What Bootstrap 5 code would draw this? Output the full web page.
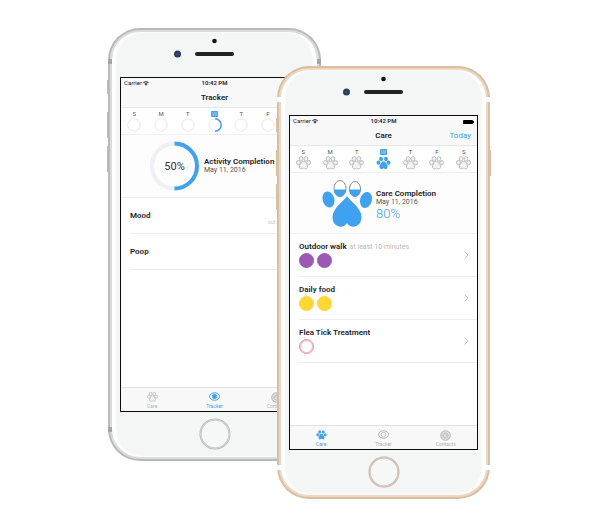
<!DOCTYPE html>
<html lang="en">
<head>
<meta charset="utf-8">
<meta name="viewport" content="width=device-width, initial-scale=1">
<title>Pet care tracker</title>
<link href="https://cdn.jsdelivr.net/npm/bootstrap@5.3.0/dist/css/bootstrap.min.css" rel="stylesheet">
<style>
  body { font-family: Roboto, "Liberation Sans", sans-serif; background: #fff; color: #1c1c1e; font-size: 8px; line-height: 10px; }
  .stage { padding-top: 28px; padding-bottom: 28px; }
  .phone { --rim: #b9babc; --rim-light: #dcdcde; --band: #a4a5a8; width: 213px; border-radius: 32px; background: var(--rim); padding: 2px; flex: none; }
  .phone-gold { --rim: #d9bea3; --rim-light: #ecd8c5; --band: #fff; margin-left: -44px; margin-top: 38px; }
  .glass { border: 2px solid var(--rim-light); border-radius: 30px; background: #f4f6f6; box-shadow: inset 4px 0 2px #fff, inset -4px 0 2px #fff; padding: 0 8px; }
  .band { background: var(--band); width: 4px; height: 5px; }
  .band.top-l { left: 0; top: 31px; } .band.top-r { right: 0; top: 31px; }
  .band.bot-l { left: 0; bottom: 29px; } .band.bot-r { right: 0; bottom: 29px; }
  .side-key { background: #fff; border: 1px solid var(--rim); width: 2px; height: 26px; left: -1px; }
  .key-mute { top: 52px; height: 14px; } .key-up { top: 84px; } .key-down { top: 118px; }
  .key-power { left: auto; right: -1px; top: 84px; }
  .earpiece { height: 45px; padding-top: 5px; }
  .earpiece svg, .home-area svg { display: block; }
  .home-area { height: 45px; padding-bottom: 2px; }
  .home-key { background: transparent; border: 0; padding: 0; }
  .screen { border: 1px solid #0b0b08; background: #fff; height: 335px; }
  .top-bar { background: #f8f8f8; border-bottom: 1px solid #e6e6e8; height: 30px; }
  .status { font-size: 6px; line-height: 10px; height: 10px; padding: 0 3px; }
  .status .clock { font-weight: 600; }
  .bar-title { font-size: 8px; line-height: 19px; font-weight: 600; margin: 0; }
  .bar-link { font-size: 8px; line-height: 19px; color: #3c9ff0; text-decoration: none; padding-right: 6px; }
  .thirds { display: grid; grid-template-columns: 1fr auto 1fr; }
  .days { height: 27px; border-bottom: 1px solid #f0f0f2; padding-top: 3px; }
  .day { background: transparent; border: 0; padding: 0; color: #555; font-size: 6px; line-height: 6px; gap: 1px; }
  .day span { padding: 0 1px; border-radius: 1px; }
  .day.picked span { background: #3fa2f0; color: #a9d5fa; }
  .summary { height: 61px; border-bottom: 1px solid #f0f0f2; background: #fdfdfd; }
  .summary h2 { font-size: 8px; line-height: 9px; font-weight: 600; margin: 0; white-space: nowrap; }
  .summary p { font-size: 7px; line-height: 9px; color: #555; margin: 0; }
  .summary .score { font-size: 13px; line-height: 14px; font-weight: 300; color: #3fa2f0; }
  .sum-care { padding-left: 32px; } .sum-act { padding-left: 29px; height: 63px; }
  .task { height: 43px; margin-left: 9px; padding-right: 8px; border-bottom: 1px solid #efeff1; }
  .task h3, .entry h3 { font-size: 8px; line-height: 10px; font-weight: 600; margin: 0; }
  .task small { font-size: 7px; line-height: 10px; color: #b9b9bc; }
  .hint, .tallies { gap: 3px; }
  .tallies { padding-top: 1px; }
  .tally { width: 15px; height: 15px; border-radius: 50%; border: 1px solid var(--tone); background: var(--tone); }
  .walk { --tone: #9b59b6; } .food { --tone: #fdd835; }
  .flea { --tone: #f58a96; } .flea .tally { background: transparent; box-shadow: inset 0 0 0 1px #f9b3bb; }
  .entry { height: 36px; margin-left: 9px; padding-right: 20px; border-bottom: 1px solid #efeff1; }
  .entry small { font-size: 5px; line-height: 6px; color: #c4c4c7; padding-top: 12px; }
  .tabs { background: #f8f8f8; border-top: 1px solid #e2e2e4; height: 24px; }
  .tabs a { color: #b0b0b2; font-size: 5px; line-height: 6px; text-decoration: none; padding: 4px 0 2px; }
  .tabs a.on { color: #3fa2f0; }
  .pale { fill: #f4f4f4; stroke: #b9b9bb; stroke-width: 3px; }
</style>
<script src="https://cdn.jsdelivr.net/npm/bootstrap@5.3.0/dist/js/bootstrap.bundle.min.js"></script>
</head>
<body>
<svg width="0" height="0" class="position-absolute" aria-hidden="true">
  <defs>
    <symbol id="paw" viewBox="0 0 46 42">
      <ellipse cx="15.500" cy="8.500" rx="6" ry="7"/><ellipse cx="30.500" cy="8.500" rx="6" ry="7"/>
      <ellipse cx="7.500" cy="20" rx="6" ry="6.500"/><ellipse cx="38.500" cy="20" rx="6" ry="6.500"/>
      <path d="M23 16C28 16 30 21 33 25C37 30 36 39 30 39.500C27 39.800 25 37 23 37S19 39.800 16 39.500C10 39 9 30 13 25C16 21 18 16 23 16Z"/>
    </symbol>
    <symbol id="wifi" viewBox="0 0 12 10"><path d="M0 3Q6-3 12 3L10.500 4.700Q6 0 1.500 4.700ZM2.500 5.700Q6 2.300 9.500 5.700L6 9.500Z" fill="#444"/></symbol>
    <symbol id="eye" viewBox="0 0 22 18"><ellipse cx="11" cy="9" rx="10" ry="7.500" fill="none" stroke="currentColor" stroke-width="2"/><circle cx="11" cy="9" r="4.500" fill="var(--pupil,none)" stroke="currentColor" stroke-width="1.500"/></symbol>
    <symbol id="contact" viewBox="0 0 22 22"><circle cx="11" cy="11" r="9.500" fill="#e4e4e6" stroke="currentColor" stroke-width="2"/><circle cx="11" cy="11" r="5.500" fill="#cfcfd1" stroke="currentColor" stroke-width="1"/><path d="M8 10h6M8 13h5" stroke="#eee" stroke-width="1"/></symbol>
    <symbol id="ear" viewBox="0 0 86 26"><circle cx="42.500" cy="4" r="2.300" fill="#111"/><circle cx="5.500" cy="17" r="3.500" fill="#333a4c"/><circle cx="5.500" cy="17" r="1.500" fill="#1c4fae"/><rect x="23" y="15" width="39" height="4" rx="2" fill="#222"/></symbol>
    <symbol id="ring" viewBox="0 0 14 14"><circle cx="7" cy="7" r="6.200" fill="none" stroke="#e8e8ed" stroke-width="1"/></symbol>
    <symbol id="next" viewBox="0 0 5 8"><path d="M.7.7L4 4L.7 7.300" fill="none" stroke="#c2c2c5" stroke-width="1"/></symbol>
  </defs>
</svg>

<main class="stage d-flex justify-content-center align-items-start">
  <section class="phone position-relative" aria-label="Tracker screen">
    <i class="side-key key-mute position-absolute"></i><i class="side-key key-up position-absolute"></i><i class="side-key key-down position-absolute"></i>
    <i class="band top-l position-absolute"></i><i class="band top-r position-absolute"></i><i class="band bot-l position-absolute"></i><i class="band bot-r position-absolute"></i>
    <div class="glass">
      <div class="earpiece d-flex justify-content-center"><svg width="86" height="26"><use href="#ear"/></svg></div>
      <div class="screen d-flex flex-column">
        <header class="top-bar">
          <div class="status thirds"><span>Carrier <svg width="6" height="5"><use href="#wifi"/></svg></span><span class="clock">10:42 PM</span><span></span></div>
          <h1 class="bar-title text-center">Tracker</h1>
        </header>
        <div class="days row g-0">
          <button class="day col d-flex flex-column align-items-center"><span>S</span><svg width="14" height="14"><use href="#ring"/></svg></button>
          <button class="day col d-flex flex-column align-items-center"><span>M</span><svg width="14" height="14"><use href="#ring"/></svg></button>
          <button class="day col d-flex flex-column align-items-center"><span>T</span><svg width="14" height="14"><use href="#ring"/></svg></button>
          <button class="day picked col d-flex flex-column align-items-center"><span>W</span><svg width="14" height="14"><use href="#ring"/><path d="M7 .8A6.200 6.200 0 0 1 7 13.200" fill="none" stroke="#3fa2f0" stroke-width="1.500"/></svg></button>
          <button class="day col d-flex flex-column align-items-center"><span>T</span><svg width="14" height="14"><use href="#ring"/></svg></button>
          <button class="day col d-flex flex-column align-items-center"><span>F</span><svg width="14" height="14"><use href="#ring"/></svg></button>
          <button class="day col d-flex flex-column align-items-center"><span>S</span><svg width="14" height="14"><use href="#ring"/></svg></button>
        </div>
        <div class="summary sum-act d-flex align-items-center gap-1">
          <svg width="50" height="50" viewBox="0 0 50 50"><circle cx="24.500" cy="25" r="22.500" fill="none" stroke="#efeff4" stroke-width="4"/><path d="M24.500 2.500A22.500 22.500 0 0 1 24.500 47.500" fill="none" stroke="#3fa2f0" stroke-width="4"/><text x="24.500" y="29" text-anchor="middle" font-size="11" fill="#333">50%</text></svg>
          <div><h2>Activity Completion</h2><p>May 11, 2016</p></div>
        </div>
        <div class="entry d-flex align-items-center justify-content-between"><h3>Mood</h3><small>out of 10</small></div>
        <div class="entry d-flex align-items-center"><h3>Poop</h3></div>
        <nav class="tabs row g-0 mt-auto text-center">
          <a href="#" class="col d-flex flex-column align-items-center justify-content-between"><svg class="pale" width="11" height="10"><use href="#paw"/></svg>Care</a>
          <a href="#" class="on col d-flex flex-column align-items-center justify-content-between"><svg width="11" height="9" style="--pupil:#3fa2f0"><use href="#eye"/></svg>Tracker</a>
          <a href="#" class="col d-flex flex-column align-items-center justify-content-between"><svg width="11" height="11"><use href="#contact"/></svg>Contacts</a>
        </nav>
      </div>
      <div class="home-area d-flex justify-content-center align-items-center"><button class="home-key" aria-label="Home"><svg width="32" height="32"><circle cx="16" cy="16" r="14.500" fill="#f6f8f8" stroke="#b4b6b7" stroke-width="2"/><circle cx="16" cy="16" r="14.500" fill="none" stroke="#d6d8d9" stroke-width="1"/></svg></button></div>
    </div>
  </section>

  <section class="phone phone-gold position-relative" aria-label="Care screen">
    <i class="side-key key-mute position-absolute"></i><i class="side-key key-up position-absolute"></i><i class="side-key key-down position-absolute"></i><i class="side-key key-power position-absolute"></i>
    <i class="band top-l position-absolute"></i><i class="band top-r position-absolute"></i><i class="band bot-l position-absolute"></i><i class="band bot-r position-absolute"></i>
    <div class="glass">
      <div class="earpiece d-flex justify-content-center"><svg width="86" height="26"><use href="#ear"/></svg></div>
      <div class="screen d-flex flex-column">
        <header class="top-bar">
          <div class="status thirds"><span>Carrier <svg width="6" height="5"><use href="#wifi"/></svg></span><span class="clock">10:42 PM</span><span class="text-end"><svg width="11" height="5"><rect width="10" height="4" y="1" rx="1"/><rect x="10" y="2" width="1" height="2"/></svg></span></div>
          <div class="thirds"><span></span><h1 class="bar-title">Care</h1><a href="#" class="bar-link text-end">Today</a></div>
        </header>
        <div class="days row g-0">
          <button class="day col d-flex flex-column align-items-center"><span>S</span><svg class="pale" width="15" height="14"><use href="#paw"/></svg></button>
          <button class="day col d-flex flex-column align-items-center"><span>M</span><svg class="pale" width="15" height="14"><use href="#paw"/></svg></button>
          <button class="day col d-flex flex-column align-items-center"><span>T</span><svg class="pale" width="15" height="14"><use href="#paw"/></svg></button>
          <button class="day picked col d-flex flex-column align-items-center"><span>W</span><svg width="15" height="14" fill="#3fa2f0"><use href="#paw"/></svg></button>
          <button class="day col d-flex flex-column align-items-center"><span>T</span><svg class="pale" width="15" height="14"><use href="#paw"/></svg></button>
          <button class="day col d-flex flex-column align-items-center"><span>F</span><svg class="pale" width="15" height="14"><use href="#paw"/></svg></button>
          <button class="day col d-flex flex-column align-items-center"><span>S</span><svg class="pale" width="15" height="14"><use href="#paw"/></svg></button>
        </div>
        <div class="summary sum-care d-flex align-items-center gap-1">
          <svg width="50" height="47" viewBox="0 0 50 47" fill="#3fa2f0">
            <g fill="#fff" stroke="#888" stroke-width="1"><ellipse cx="18" cy="8.500" rx="6" ry="8"/><ellipse cx="33" cy="9" rx="5.500" ry="7.500"/></g>
            <path d="M12 9.500H24C24 14 21 16.500 18 16.500S12 14 12 9.500ZM27.500 9.500H38.500C38.500 14 36 16.500 33 16.500S27.500 14 27.500 9.500Z"/>
            <ellipse cx="6.500" cy="19.500" rx="5.800" ry="8.200" transform="rotate(-14 6.500 19.500)"/><ellipse cx="44" cy="20" rx="5.800" ry="8.200" transform="rotate(14 44 20)"/>
            <path d="M25 16C28 21 39.500 28 39.500 37C39.500 48 28 49 25 43C22 49 10.500 48 10.500 37C10.500 28 22 21 25 16Z"/>
          </svg>
          <div class="pt-1"><h2>Care Completion</h2><p>May 11, 2016</p><p class="score">80%</p></div>
        </div>
        <div class="task walk d-flex align-items-center justify-content-between"><div><div class="hint d-flex"><h3>Outdoor walk</h3><small>at least 10 minutes</small></div><div class="tallies d-flex"><span class="tally"></span><span class="tally"></span></div></div><svg width="5" height="8"><use href="#next"/></svg></div>
        <div class="task food d-flex align-items-center justify-content-between"><div><h3>Daily food</h3><div class="tallies d-flex"><span class="tally"></span><span class="tally"></span></div></div><svg width="5" height="8"><use href="#next"/></svg></div>
        <div class="task flea d-flex align-items-center justify-content-between"><div><h3>Flea Tick Treatment</h3><div class="tallies d-flex"><span class="tally"></span></div></div><svg width="5" height="8"><use href="#next"/></svg></div>
        <nav class="tabs row g-0 mt-auto text-center">
          <a href="#" class="on col d-flex flex-column align-items-center justify-content-between"><svg width="11" height="10" fill="currentColor"><use href="#paw"/></svg>Care</a>
          <a href="#" class="col d-flex flex-column align-items-center justify-content-between"><svg width="11" height="9"><use href="#eye"/></svg>Tracker</a>
          <a href="#" class="col d-flex flex-column align-items-center justify-content-between"><svg width="11" height="11"><use href="#contact"/></svg>Contacts</a>
        </nav>
      </div>
      <div class="home-area d-flex justify-content-center align-items-center"><button class="home-key" aria-label="Home"><svg width="32" height="32"><circle cx="16" cy="16" r="14.500" fill="#f6f8f8" stroke="#c7b3a6" stroke-width="2"/><circle cx="16" cy="16" r="14.500" fill="none" stroke="#d8ccc3" stroke-width="1"/></svg></button></div>
    </div>
  </section>
</main>
</body>
</html>
